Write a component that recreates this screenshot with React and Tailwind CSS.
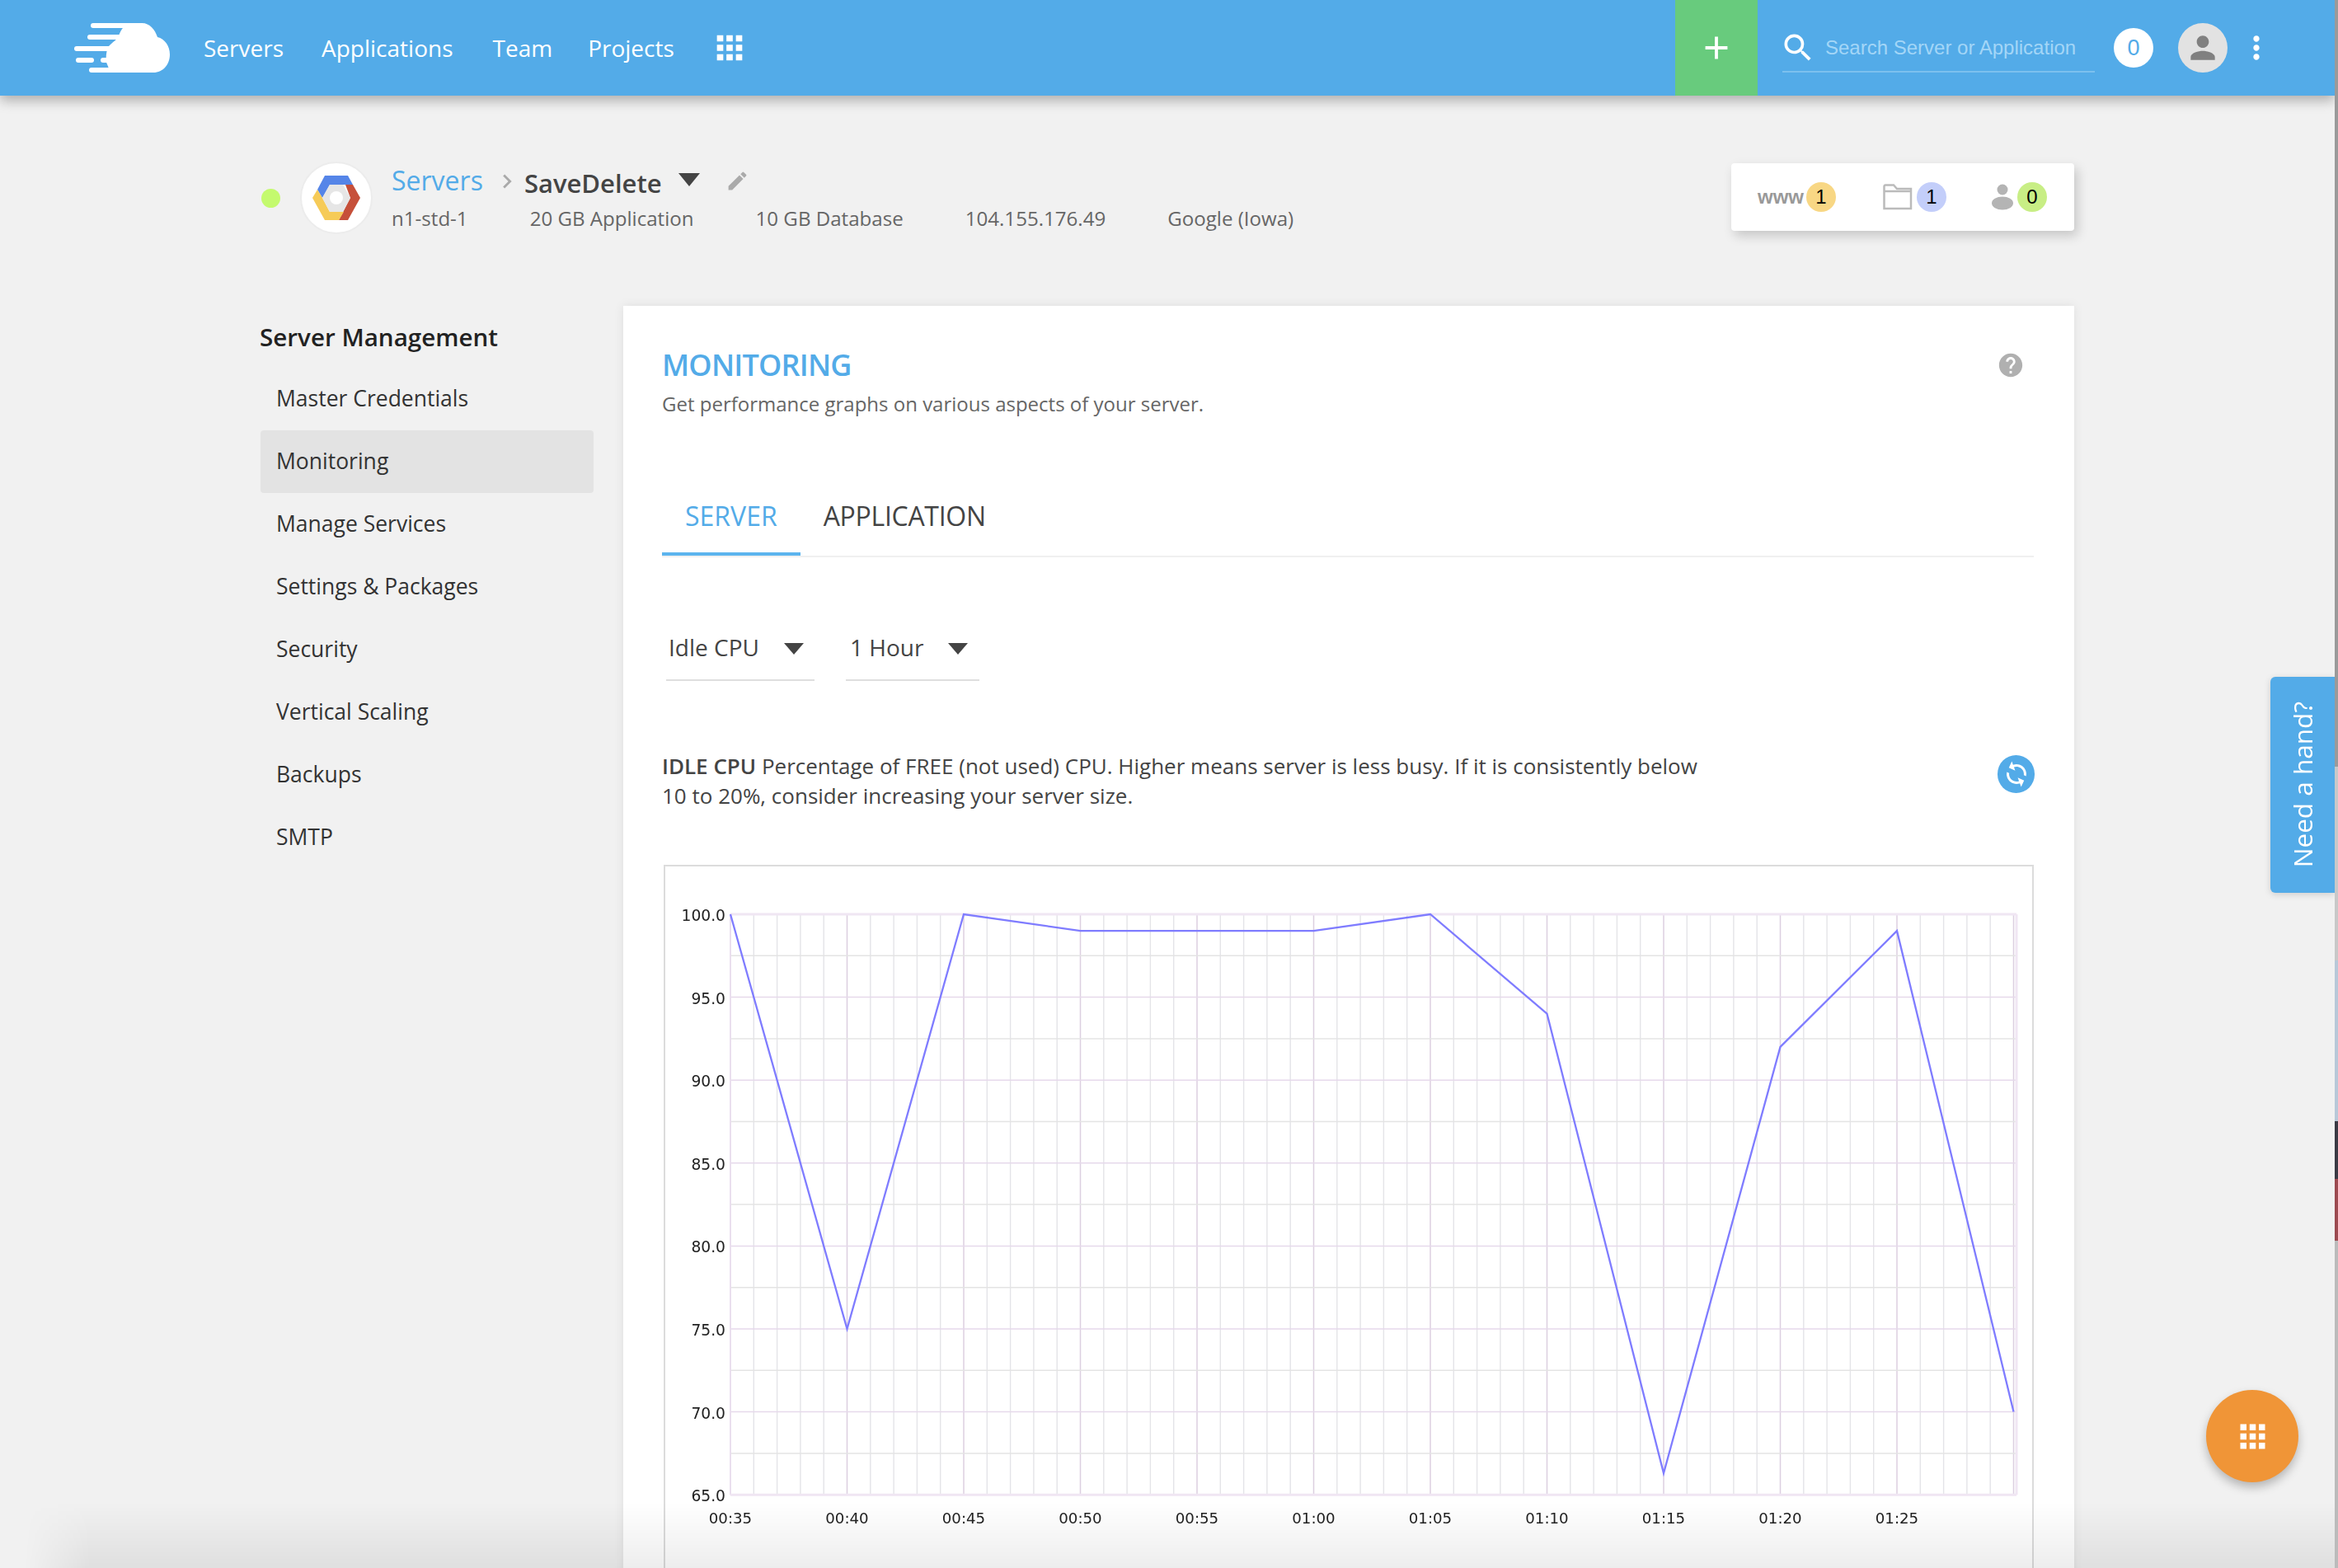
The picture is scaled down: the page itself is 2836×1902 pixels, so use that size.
import React from "react";
import { MdEdit, MdHelp, MdSearch, MdPerson, MdMoreVert, MdApps, MdAdd, MdSync, MdChevronRight } from "react-icons/md";

const sidebarItems = ["Master Credentials", "Monitoring", "Manage Services", "Settings & Packages", "Security", "Vertical Scaling", "Backups", "SMTP"];

function Logo() {
  return (
    <svg width="116" height="60" viewBox="10 8 116 60" className="block">
      <g fill="#fff">
        <path d="M92 8C102 8 108 16 111 25C120 27 126 36 126 46C126 58 118 68 106 68L54 68L50 58C48 54 48 38 54 34C58 30 62 28 64 24C66 16 72 8 80 8Z" />
        <rect x="30" y="8" width="55" height="6" rx="3" />
        <rect x="26" y="22" width="44" height="6" rx="3" />
        <rect x="10" y="36" width="50" height="6" rx="3" />
        <rect x="12" y="50" width="22" height="6" rx="3" />
        <rect x="42" y="50" width="14" height="6" rx="3" />
        <rect x="28" y="62" width="40" height="6" rx="3" />
      </g>
    </svg>
  );
}

function GoogleHex() {
  return (
    <svg width="58" height="54" viewBox="0 0 58 54" className="block">
      <polygon points="15,0 43,0 49,11 21,11 12,27 6,17" fill="#5585E8" />
      <polygon points="40,11 49,11 58,27 43,54 32,54 46,27" fill="#C6503A" />
      <polygon points="6,17 12,27 21,44 38,44 32,54 15,54 0,27" fill="#F6CB58" />
      <polygon points="21,11 37,11 46,27 37,44 21,44 12,27" fill="#E6E6E6" />
      <circle cx="29" cy="27" r="8" fill="#fff" />
    </svg>
  );
}

function Chart() {
  const x0 = 886, stepX = 28.3, y0 = 1109, stepY = 50.3;
  const major = 141.5;
  const yOf = (v) => y0 + (100 - v) * 20.12;
  const data = [100, 75, 100, 99, 99, 99, 100, 94, 66.3, 92, 99, 70];
  const points = data.map((v, i) => `${x0 + i * major},${yOf(v)}`).join(" ");
  const yLabels = ["100.0", "95.0", "90.0", "85.0", "80.0", "75.0", "70.0", "65.0"];
  const xLabels = ["00:35", "00:40", "00:45", "00:50", "00:55", "01:00", "01:05", "01:10", "01:15", "01:20", "01:25"];
  const right = 2446, bottom = y0 + 14 * stepY;
  return (
    <svg width="1658" height="850" viewBox="807 1051 1658 850" className="block blur-[0.4px]">
      {Array.from({ length: 56 }, (_, i) => i).map((i) => (
        <line key={i} x1={x0 + i * stepX} x2={x0 + i * stepX} y1={y0} y2={bottom}
          stroke={i % 5 === 0 ? "#dccfe0" : "#e4e4e8"} strokeWidth={i % 5 === 0 ? 1.5 : 1.4} />
      ))}
      {Array.from({ length: 15 }, (_, k) => k).map((k) => (
        <line key={k} x1={x0} x2={right} y1={y0 + k * stepY} y2={y0 + k * stepY}
          stroke={k % 2 === 0 ? "#e6d9eb" : "#e4e4e4"} strokeWidth={1.5} />
      ))}
      <line x1={right} x2={right} y1={y0} y2={bottom} stroke="#f0e6f3" strokeWidth="3" />
      <line x1={x0} x2={x0} y1={y0} y2={bottom} stroke="#eadfee" strokeWidth="2" />
      <line x1={x0} x2={right} y1={y0} y2={y0} stroke="#f0e6f3" strokeWidth="3" />
      <line x1={x0} x2={right} y1={bottom} y2={bottom} stroke="#f0e6f3" strokeWidth="3" />
      <polyline points={points} fill="none" stroke="#7f7cff" strokeWidth="2.3" />
      {yLabels.map((t, i) => (
        <text key={t} x="880" y={y0 + i * 100.6 + 8} textAnchor="end" fontFamily="'DejaVu Sans', sans-serif" fontSize="18.7" fill="#222">{t}</text>
      ))}
      {xLabels.map((t, i) => (
        <text key={t} x={x0 + i * major} y="1848" textAnchor="middle" fontFamily="'DejaVu Sans', sans-serif" fontSize="18.2" fill="#222">{t}</text>
      ))}
    </svg>
  );
}

function Dropdown({ label, className, gapClass }) {
  return (
    <div className={`flex h-[80px] items-center border-b-2 border-[#dedede] ${className}`}>
      <span className="text-[28px] leading-none text-[#444]">{label}</span>
      <span className={`mt-[4px] h-0 w-0 border-x-[12px] border-t-[14px] border-x-transparent border-t-[#444] ${gapClass}`} />
    </div>
  );
}

function Badge({ n, color }) {
  return (
    <span className={`flex h-[36px] w-[36px] items-center justify-center rounded-full font-['Liberation_Sans',sans-serif] text-[24px] text-black ${color}`}>{n}</span>
  );
}

export default function App() {
  return (
    <div className="relative h-[1902px] w-[2836px] overflow-hidden bg-[#f1f1f1] font-['Open_Sans',sans-serif] text-[#444]">
      <header className="relative z-10 flex h-[116px] w-[2832px] items-center bg-[#53abe8] pl-[90px] pr-[73px] shadow-[0_6px_14px_rgba(0,0,0,0.28)]">
        <Logo />
        <nav className="ml-[41px] flex items-center gap-[46px] pb-[1px] text-[28px] text-white">
          <span>Servers</span>
          <span>Applications</span>
          <span className="ml-[2px]">Team</span>
          <span className="-ml-[3px]">Projects</span>
        </nav>
        <MdApps className="ml-[44px] text-white" size={46} />
        <div className="flex-1" />
        <div className="flex h-full w-[100px] items-center justify-center bg-[#68cb7d] text-white">
          <MdAdd size={46} />
        </div>
        <div className="ml-[30px] flex h-[60px] w-[379px] items-center border-b-2 border-[#7cc0ee] pt-[2px]">
          <MdSearch className="ml-[-3px] text-white" size={44} />
          <span className="ml-[11px] font-['Liberation_Sans',sans-serif] text-[24px] text-[#a3d6f7]">Search Server or Application</span>
        </div>
        <span className="ml-[23px] flex h-[48px] w-[48px] items-center justify-center rounded-full bg-white font-['Liberation_Sans',sans-serif] text-[27px] text-[#53abe8]">0</span>
        <span className="ml-[30px] flex h-[60px] w-[60px] items-center justify-center rounded-full bg-[#e2e2e2] text-[#808080]">
          <MdPerson size={44} />
        </span>
        <MdMoreVert className="ml-[13px] text-white" size={44} />
      </header>

      <main className="ml-[315px] w-[2201px]">
        <section className="relative mt-[80px] flex h-[88px] items-center">
          <span className="ml-[2px] h-[23px] w-[23px] rounded-full bg-[#c4fa6e]" />
          <span className="ml-[24px] flex h-[88px] w-[88px] items-center justify-center rounded-full border-2 border-[#ececec] bg-white">
            <GoogleHex />
          </span>
          <div className="ml-[23px] flex flex-col">
            <div className="flex h-[46px] items-center">
              <span className="mb-[2px] text-[32px] leading-none text-[#53abe8]">Servers</span>
              <MdChevronRight className="ml-[12px] text-[#aaa]" size={34} />
              <span className="ml-[4px] mt-[6px] text-[31px] font-semibold leading-none text-[#444]">SaveDelete</span>
              <span className="ml-[20px] mb-[3px] h-0 w-0 border-x-[13px] border-t-[16px] border-x-transparent border-t-[#444]" />
              <MdEdit className="ml-[31px] text-[#aaa]" size={29} />
            </div>
            <div className="mt-[5px] flex h-[36px] items-center text-[24.1px] text-[#666]">
              <span>n1-std-1</span>
              <span className="ml-[75px]">20 GB Application</span>
              <span className="ml-[75px]">10 GB Database</span>
              <span className="ml-[75px]">104.155.176.49</span>
              <span className="ml-[75px]">Google (Iowa)</span>
            </div>
          </div>
          <div className="absolute right-0 top-[2px] flex h-[82px] w-[416px] items-center rounded-[4px] bg-white pl-[32px] shadow-[4px_6px_14px_rgba(0,0,0,0.18)]">
            <span className="font-['Liberation_Sans',sans-serif] text-[24px] font-bold leading-none text-[#999]">www</span>
            <span className="ml-[3px]"><Badge n="1" color="bg-[#f8d784]" /></span>
            <svg width="36" height="32" viewBox="0 0 36 32" className="ml-[57px]" fill="none" stroke="#bbb" strokeWidth="2.5">
              <path d="M1.5 30V3a1.5 1.5 0 0 1 1.5-1.5h10l4 4.5h17v24z" />
              <path d="M1.5 9h33" />
            </svg>
            <span className="ml-[5px]"><Badge n="1" color="bg-[#c3cefa]" /></span>
            <svg width="28" height="32" viewBox="0 0 28 32" className="ml-[54px]" fill="#b4b4b4">
              <circle cx="14" cy="7" r="6.5" />
              <ellipse cx="14" cy="23.5" rx="13" ry="8" />
            </svg>
            <span className="ml-[4px]"><Badge n="0" color="bg-[#c8ee85]" /></span>
          </div>
        </section>

        <div className="mt-[87px] flex items-start">
          <aside className="w-[405px] shrink-0">
            <h3 className="flex h-[75px] items-center pt-[2px] text-[29.6px] font-semibold text-[#222]">Server Management</h3>
            <ul className="pl-[1px]">
              {sidebarItems.map((item) => (
                <li key={item} className={`flex h-[76px] items-center rounded-[4px] pl-[19px] text-[26.5px] text-[#333] ${item === "Monitoring" ? "bg-[#e3e3e3]" : ""}`}>
                  <span>{item}</span>
                </li>
              ))}
            </ul>
          </aside>

          <section className="ml-[36px] h-[1700px] w-[1760px] shrink-0 bg-white pl-[47px] pr-[49px] pt-[48px] shadow-[0_0_12px_rgba(0,0,0,0.08)]">
            <div className="flex items-center justify-between pr-[11px]">
              <h1 className="text-[36px] font-semibold leading-[48px] tracking-[-0.8px] text-[#53abe8]">MONITORING</h1>
              <MdHelp className="text-[#b0b0b0]" size={34} />
            </div>
            <p className="mt-[5px] text-[24px] leading-[36px] text-[#666]">Get performance graphs on various aspects of your server.</p>

            <div className="mt-[72px] flex h-[96px] border-b-2 border-[#f0f0f0]">
              <div className="flex h-[94px] items-center border-b-4 border-[#5cb4ee] px-[28px] pt-[2px] text-[32px] text-[#53abe8]">SERVER</div>
              <div className="flex h-[94px] items-center border-b-4 border-transparent px-[28px] pt-[2px] text-[32px] tracking-[-0.3px] text-[#444]">APPLICATION</div>
            </div>

            <div className="ml-[5px] mt-[70px] flex gap-[38px]">
              <Dropdown label="Idle CPU" className="w-[180px] pl-[3px]" gapClass="ml-[30px]" />
              <Dropdown label="1 Hour" className="w-[162px] pl-[5px]" gapClass="ml-[30px]" />
            </div>

            <div className="mt-[85px] flex items-start justify-between">
              <p className="w-[1270px] text-[26px] leading-[36px] text-[#444]">
                <strong className="font-semibold">IDLE CPU</strong> Percentage of FREE (not used) CPU. Higher means server is less busy. If it is consistently below 10 to 20%, consider increasing your server size.
              </p>
              <span className="-mr-[1px] mt-[5px] flex h-[46px] w-[45px] items-center justify-center rounded-full bg-[#53abe8] text-white">
                <MdSync className="-rotate-[20deg]" size={36} />
              </span>
            </div>

            <div className="ml-[2px] mt-[66px] h-[900px] w-[1662px] border-2 border-[#dcdcdc]">
              <Chart />
            </div>
          </section>
        </div>
      </main>

      <aside className="absolute left-[2754px] top-[821px] z-10 flex h-[262px] w-[78px] items-center justify-center rounded-l-[6px] bg-[#53abe8] shadow-[0_2px_8px_rgba(0,0,0,0.15)]">
        <span className="rotate-180 text-[31.5px] font-medium leading-none text-white [writing-mode:vertical-rl]">Need a hand?</span>
      </aside>

      <button className="absolute left-[2676px] top-[1686px] z-10 flex h-[112px] w-[112px] items-center justify-center rounded-full bg-[#f09537] text-white shadow-[0_6px_12px_rgba(0,0,0,0.25)]">
        <MdApps size={45} />
      </button>

      <div className="pointer-events-none absolute bottom-0 left-0 z-20 h-[80px] w-[2832px] bg-linear-to-t from-black/[0.07] to-transparent [mask-image:linear-gradient(to_right,transparent_30px,black_110px)]" />

      <div className="absolute right-0 top-0 z-30 flex h-[1902px] w-[4px] flex-col">
        <div className="h-[930px] bg-[#9a9a9a]" />
        <div className="h-[235px] bg-[#c8c8c8]" />
        <div className="h-[195px] bg-[#b8c8d8]" />
        <div className="h-[70px] bg-[#3a3a44]" />
        <div className="h-[75px] bg-[#9c4a50]" />
        <div className="flex-1 bg-[#bbbbbb]" />
      </div>
    </div>
  );
}
